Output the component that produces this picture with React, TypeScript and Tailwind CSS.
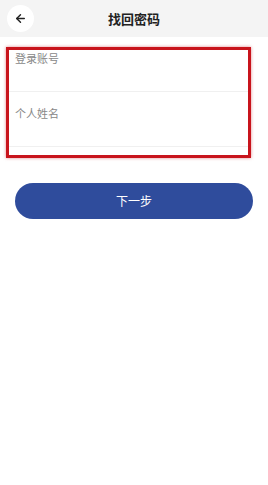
import { ArrowLeft } from "lucide-react";

export default function App() {
  return (
    <div className="w-[268px] h-[485px] bg-white font-['Noto_Sans_CJK_SC','Noto_Sans',sans-serif]">
      {/* header */}
      <div className="relative flex h-[37px] items-center justify-center bg-[#f4f4f4]">
        <button className="absolute left-[7px] top-[5px] flex h-[27px] w-[27px] items-center justify-center rounded-full bg-white">
          <ArrowLeft size={13} strokeWidth={2.6} className="text-[#222]" />
        </button>
        <h1 className="text-[13px] font-bold text-[#222]">找回密码</h1>
      </div>

      {/* form */}
      <div className="mx-[6px] mt-[10px] w-[245px] border-[3px] border-[#c8141c] pb-[8px] shadow-[0_0_3px_rgba(200,20,28,0.5)]">
        <div className="h-[42px] border-b border-[#f0f0f0] px-[6px] pt-[1px]">
          <span className="block text-[11px] leading-[14px] text-[#888]">登录账号</span>
        </div>
        <div className="h-[55px] border-b border-[#f0f0f0] px-[6px] pt-[14px]">
          <span className="block text-[11px] leading-[14px] text-[#888]">个人姓名</span>
        </div>
      </div>

      {/* button */}
      <div className="px-[15px] pt-[25px]">
        <button className="flex h-[36px] w-[238px] items-center justify-center rounded-full bg-[#2f4c9c] text-[12px] text-white">
          下一步
        </button>
      </div>
    </div>
  );
}
